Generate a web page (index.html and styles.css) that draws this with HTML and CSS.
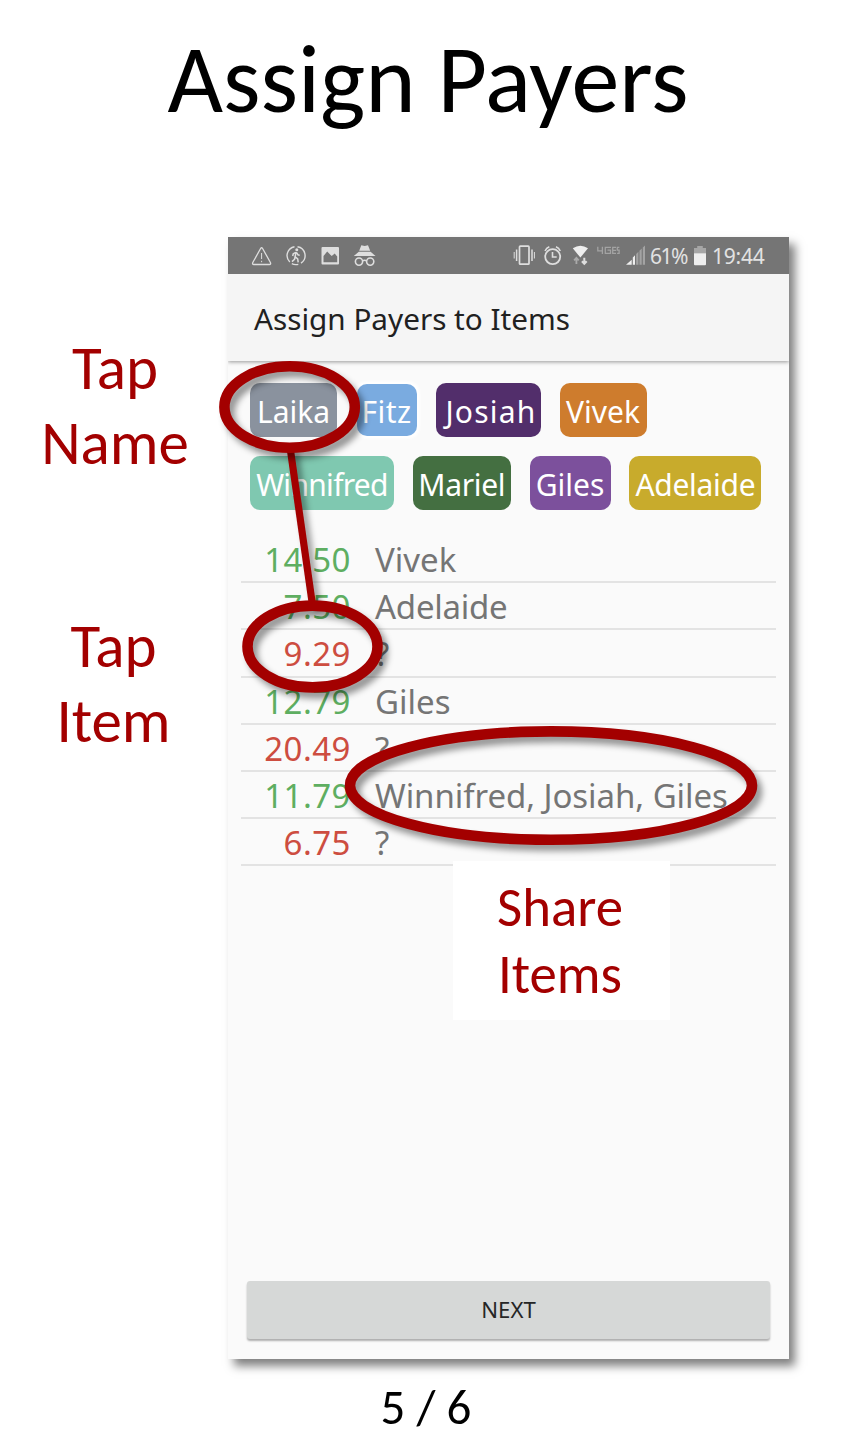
FILE: index.html
```html
<!DOCTYPE html>
<html lang="en">
<head>
<meta charset="utf-8">
<title>Assign Payers</title>
<link rel="stylesheet" href="styles.css">
</head>
<body>
<main class="slide">
  <h1 class="title">Assign Payers</h1>
  <div class="stage">
    <div class="captions">
      <p class="caption caption-name">Tap<br>Name</p>
      <p class="caption caption-item">Tap<br>Item</p>
    </div>
    <section class="phone">
      <div class="status">
        <svg class="status-left" width="105" height="37" viewBox="0 0 105 37" fill="none" stroke="#dedede">
          <path d="M12.6 11.500 4.800 25.500Q4 27.500 5.800 27.500H21.400Q23.200 27.500 22.400 25.500L14.600 11.500Q13.600 10 12.600 11.500Z" stroke-width="1.300" stroke-linejoin="round"/>
          <path d="M13.600 16v6M13.600 23.800v1.400" stroke-width="1"/>
          <path d="M46.500 9.700A9 9 0 0 0 41.800 25M43.800 26.700A9 9 0 0 0 50.300 27.300M53 26.100A9 9 0 0 0 49.500 9.700" stroke-width="1.400"/>
          <circle cx="48.800" cy="12.800" r="1.500" fill="#dedede" stroke="none"/>
          <path d="M47.900 15 47.200 19.800 49.700 22 50.200 25.300M47.200 19.500 46.500 22.300 44 24.600M47.800 15.300 45.300 16.700 44.700 19M48.600 15.600 50 17.800 51.700 18.400" stroke-width="1.500"/>
          <path d="M74.500 10h15.500a1 1 0 0 1 1 1v15.500a1 1 0 0 1-1 1H74.500a1 1 0 0 1-1-1v-15.500a1 1 0 0 1 1-1ZM75.500 25.200h13.700V19.500l-2.500-3-3 2.600-4.500-4.600-3.700 4.500Z" fill="#dedede" fill-rule="evenodd" stroke="none"/>
        </svg>
        <svg class="incognito" width="24" height="37" viewBox="0 0 24 37">
          <path d="M8.300 8.200 11.700 9 15 8.200 17.200 13.700H6.200ZM5.800 14.700H17.600L22.500 19H.8Z" fill="#dedede"/>
          <circle cx="6" cy="24.600" r="3.600" fill="none" stroke="#dedede" stroke-width="1.600"/>
          <circle cx="17.200" cy="24.600" r="3.600" fill="none" stroke="#dedede" stroke-width="1.600"/>
          <path d="M9.300 24q2.300-1.600 4.600 0" fill="none" stroke="#dedede" stroke-width="1.400"/>
        </svg>
        <div class="status-right">
          <svg class="radios" width="134" height="37" viewBox="0 0 134 37" fill="none" stroke="#dedede">
            <rect x="7.500" y="9.200" width="9.500" height="18" rx=".8" stroke-width="1.700"/>
            <path d="M4.600 12.500v11.500M20 12.500v11.500" stroke-width="1.500"/><path d="M2.200 15v6.500M22.400 15v6.500" stroke-width="1"/>
            <circle cx="40.700" cy="19.700" r="7.500" stroke-width="1.800"/><path d="M40.500 15v5h4.200" stroke-width="1.600"/>
            <path d="M33 14q1.300-3 4.300-4.200M48.300 14q-1.300-3-4.300-4.200" stroke-width="1.500"/>
            <path d="M60.800 11.200q7.600-5 15.200 0L68.400 20.600Z" fill="#eee" stroke="none"/>
            <path d="M72.300 20.800v5.300M69.900 24.200l2.400 2.600 2.400-2.600" stroke="#dedede" stroke-width="2"/>
            <path d="M64.400 27v-5M62.100 23.300l2.300-2.500 2.300 2.500" stroke="#aaa" stroke-width="1.800"/>
            <path d="M85.800 9.800v4h5.200M90.400 9.800v7.300M99 10.400h-5.700v6h5.200v-3.200h-3M104 10.400h-3.300v6h3.300M100.700 13.400h3.300M107.300 10.400h-2v2.800h1.800v3.200h-2" stroke="#a3a3a3" stroke-width="1.300"/>
            <path d="M114 27.700 119.700 22.700V27.700ZM120.800 20.600l2.200-2.300v9.400h-2.200Z" fill="#eee" stroke="none"/>
            <path d="M124.200 17l2.200-2.200v12.900h-2.200ZM127.500 13.700l2.200-2.200v16.200h-2.200ZM130.800 10.400l2.200-2v19.300h-2.200Z" fill="#a3a3a3" stroke="none"/>
          </svg>
          <span class="percent">61%</span>
          <svg class="battery" width="14" height="37" viewBox="0 0 14 37"><path d="M4.200 9h5.600v2H13v5.500H1V11h3.200Z" fill="#a6a6a6"/><path d="M1 16.200h12V27.200q0 1-1 1H2q-1 0-1-1Z" fill="#eee"/></svg>
          <span class="clock">19:44</span>
        </div>
      </div>
      <header class="appbar">Assign Payers to Items</header>
      <div class="chips">
        <div class="chip-row">
          <span class="chip laika">Laika</span><span class="chip fitz">Fitz</span><span class="chip josiah">Josiah</span><span class="chip vivek">Vivek</span>
        </div>
        <div class="chip-row second">
          <span class="chip winnifred">Winnifred</span><span class="chip mariel">Mariel</span><span class="chip giles">Giles</span><span class="chip adelaide">Adelaide</span>
        </div>
      </div>
      <ul class="items">
        <li><span class="price paid">14.50</span><span>Vivek</span></li>
        <li><span class="price paid">7.50</span><span class="tighter">Adelaide</span></li>
        <li><span class="price">9.29</span><span>?</span></li>
        <li><span class="price paid">12.79</span><span>Giles</span></li>
        <li><span class="price">20.49</span><span>?</span></li>
        <li><span class="price paid">11.79</span><span class="tight">Winnifred, Josiah, Giles</span></li>
        <li><span class="price">6.75</span><span>?</span></li>
      </ul>
      <button class="next">NEXT</button>
    </section>
    <svg class="marks" width="852" height="1197" viewBox="0 237 852 1197">
      <g fill="none" stroke="#a30000" stroke-width="10.600">
        <path class="mark" d="M290 447 312.500 605" stroke-width="7.200"/>
        <ellipse class="mark" cx="289.600" cy="407" rx="65.200" ry="40.700"/>
        <ellipse class="mark" cx="312.500" cy="646.500" rx="65" ry="40.900"/>
        <ellipse class="mark" cx="551" cy="785.600" rx="201" ry="54.200"/>
      </g>
    </svg>
    <p class="share">Share<br>Items</p>
  </div>
  <footer class="pager">5 / 6</footer>
</main>
</body>
</html>
```
FILE: styles.css
```css
* { box-sizing: border-box; }
body { margin: 0; background: #fff; }
.slide { width: 852px; height: 1434px; overflow: hidden; font-family: Carlito, Calibri, Lato, sans-serif; }
.title { margin: 0; height: 237px; padding-top: 21px; padding-left: 4px; text-align: center; font-size: 96px; font-weight: 400; line-height: 117px; color: #000; }
.stage { position: relative; display: grid; grid-template-columns: 228px 561px; height: 1122px; }
.captions { display: flex; flex-direction: column; color: #a30000; padding-top: 94px; gap: 129px; }
.caption { margin: 0; font-size: 61px; line-height: 74.500px; text-align: center; }
.caption-name { padding-left: 2px; }
.caption-item { padding-right: 1px; }

.phone { display: flex; flex-direction: column; background: #fafafa; box-shadow: 6px 7px 9px rgba(0, 0, 0, .5); font-family: "Noto Sans", sans-serif; }
.status { display: flex; height: 37px; background: #757575; color: #e2e2e2; padding-left: 20px; padding-right: 24px; font-size: 21px; line-height: 39px; }
.status-left, .incognito, .radios { flex: none; }
.status-right { display: flex; margin-left: auto; }
.percent { letter-spacing: -1.500px; width: 45px; padding-left: 4px; }
.battery { margin: 0 5px 0 2px; }
.clock { letter-spacing: -.2px; width: 53px; }
.appbar { height: 87px; padding-left: 26px; background: #f5f5f5; color: #212121; font-size: 29.700px; line-height: 90px; box-shadow: 0 1px 4px rgba(0, 0, 0, .4); clip-path: inset(0 0 -8px 0); }

.chips { display: flex; flex-direction: column; gap: 19px; padding: 22px 0 0 22px; }
.chip-row { display: flex; align-items: center; gap: 19.500px; height: 54px; }
.second { gap: 18.800px; }
.chip { height: 54px; border-radius: 10px; color: #fff; font-size: 30px; line-height: 57px; text-align: center; white-space: nowrap; }
.laika { width: 87px; background: #8a929e; }
.fitz { width: 60px; height: 52px; line-height: 55px; background: #7aabe0; letter-spacing: .500px; box-shadow: 0 0 3px 3px #fff; }
.josiah { width: 105px; margin-right: -1px; background: #522e6b; letter-spacing: 1.200px; padding-left: 5px; }
.vivek { width: 87px; background: #ce7c2d; }
.winnifred { width: 144px; background: #7fc8b0; letter-spacing: -.700px; }
.mariel { width: 98px; background: #446f41; letter-spacing: -.300px; }
.giles { width: 81px; background: #7c509c; }
.adelaide { width: 132px; background: #c8ab2c; letter-spacing: -.300px; }

.items { list-style: none; margin: 26px 13px 0 12.500px; padding: 0; color: #757575; font-size: 33px; }
.items li { display: flex; gap: 24px; height: 47.200px; line-height: 47px; border-bottom: 2px solid #e3e3e3; white-space: nowrap; }
.price { width: 110.500px; text-align: right; letter-spacing: .500px; color: #cd4d40; }
.paid { color: #5eae61; }
.tight { letter-spacing: -.060px; }
.tighter { letter-spacing: -.250px; }
.next { margin: auto 19px 20px 19px; height: 58px; padding: 0 0 1px; border: 0; border-radius: 3px; background: #d6d8d7; box-shadow: 0 2px 2px rgba(0, 0, 0, .3); color: #262626; font: 22.200px "Noto Sans", sans-serif; }

.marks { position: absolute; left: 0; top: 0; }
.mark { filter: drop-shadow(5px 6px 3px rgba(0, 0, 0, .4)); }
.share { position: absolute; left: 453px; top: 624px; width: 217px; height: 159px; margin: 0; padding: 13px 3px 0 0; background: #fff; color: #a30000; text-align: center; font-size: 54.800px; line-height: 67px; }
.pager { height: 75px; padding-top: 22px; text-align: center; font-size: 49px; line-height: 52px; color: #000; }
```
